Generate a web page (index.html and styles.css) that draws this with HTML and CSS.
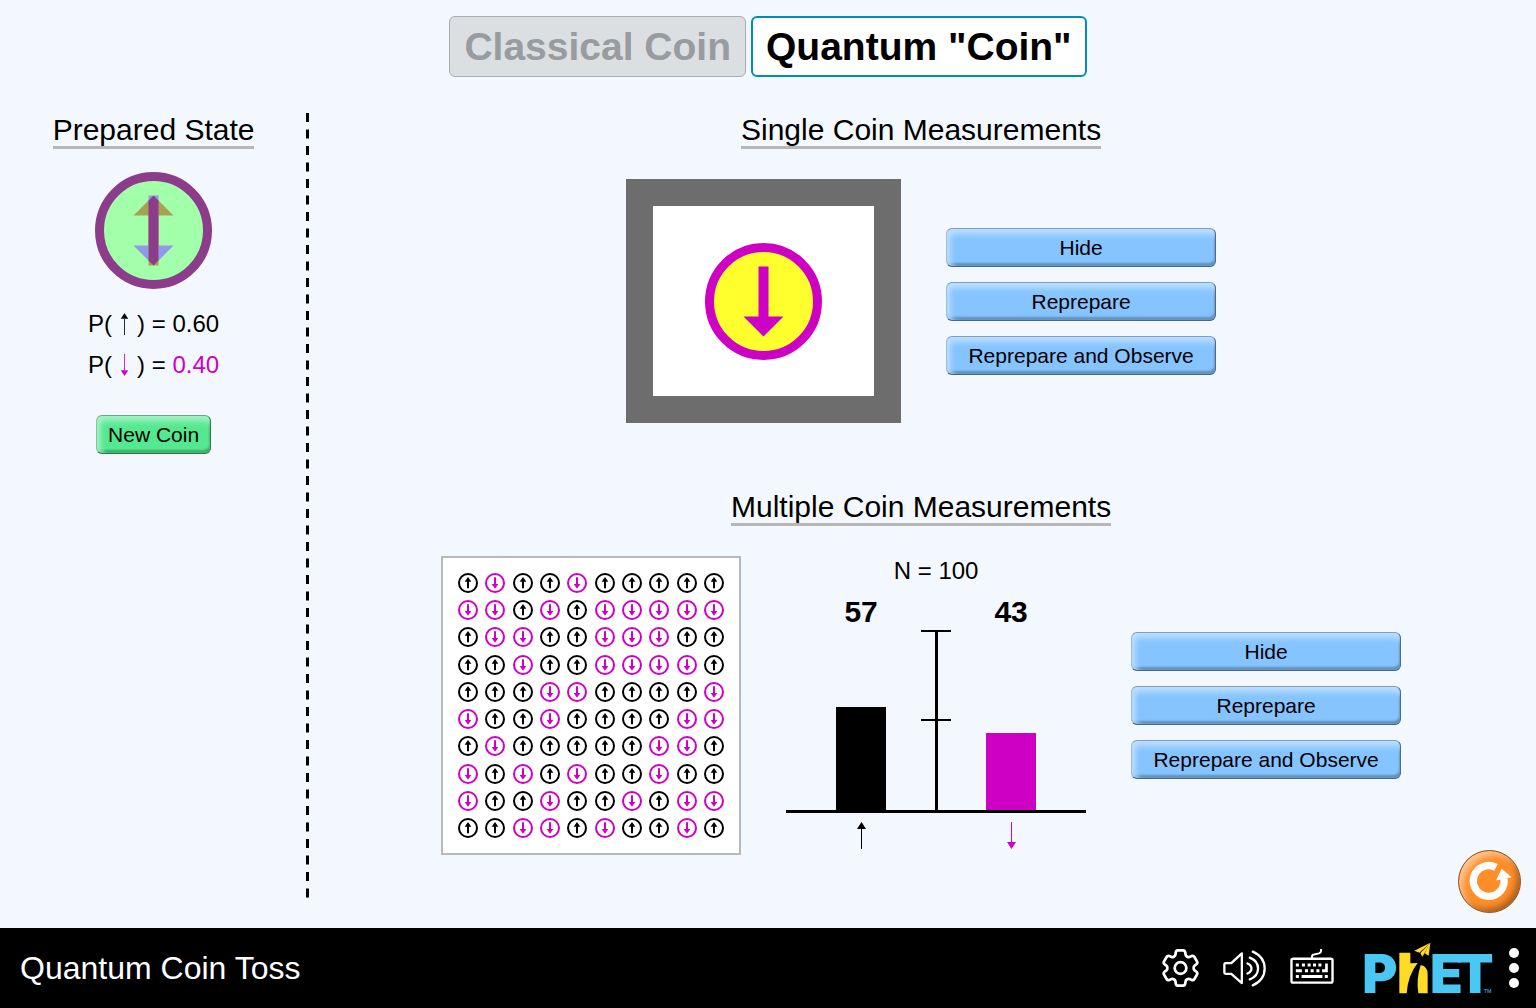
FILE: index.html
```html
<!DOCTYPE html>
<html lang="en">
<head>
  <meta charset="utf-8">
  <meta name="viewport" content="width=device-width, initial-scale=1">
  <title>Quantum Coin Toss</title>
  <link rel="stylesheet" href="styles.css">
  <script src="app.js" defer></script>
</head>
<body>
  <svg class="defs" width="0" height="0" aria-hidden="true">
    <symbol id="thin-up" viewBox="0 0 9 27"><path d="M4 7h1v20H4z"/><path d="M4.500 0L9 7H0z"/></symbol>
    <symbol id="thin-down" viewBox="0 0 9 27"><path d="M4 0h1v20H4z"/><path d="M4.500 27L9 20H0z"/></symbol>
    <symbol id="coin-up" viewBox="0 0 60 60">
      <circle cx="30" cy="30" r="27" fill="#fff" stroke="currentColor" stroke-width="6"/>
      <path d="M30 12l10 14h-7v20h-6V26h-7z"/>
    </symbol>
    <symbol id="coin-down" viewBox="0 0 60 60">
      <circle cx="30" cy="30" r="27" fill="#fff" stroke="currentColor" stroke-width="6"/>
      <path d="M30 47l-10-14h7V13h6v20h7z"/>
    </symbol>
  </svg>

  <main class="screen">
    <nav class="tabs" aria-label="Coin type">
      <button class="tab" type="button">Classical Coin</button>
      <button class="tab tab-active" type="button" aria-pressed="true">Quantum "Coin"</button>
    </nav>

    <div class="content">
      <aside class="prepared">
        <h2 class="heading">Prepared State</h2>
        <svg class="coin" viewBox="0 0 234 234" role="img" aria-label="Superposed coin">
          <circle cx="117" cy="117" r="108" fill="#a2ffaa" stroke="#8c3c8a" stroke-width="18"/>
          <path fill="#a3a352" d="M117 47l40 40h-30v100h-20V87H77z"/>
          <path fill="#8f99e8" d="M107 47h20v10l-10-10-10 10zM77 147h30v30zM157 147h-30v30z"/>
          <path fill="#8c3c8a" d="M117 47l10 10v120l-10 10-10-10V57z"/>
        </svg>
        <div class="probabilities">
          <p class="probability">P(<svg class="thin-arrow"><use href="#thin-up"/></svg>)&nbsp;=&nbsp;<span>0.60</span></p>
          <p class="probability">P(<svg class="thin-arrow down"><use href="#thin-down"/></svg>)&nbsp;=&nbsp;<span class="down">0.40</span></p>
        </div>
        <button class="button button-green" type="button">New Coin</button>
      </aside>

      <svg class="divider" aria-hidden="true"><line x1="50%" x2="50%" y1="0" y2="100%" pathLength="1570"/></svg>

      <div class="measurements">
        <section class="measurement">
          <h2 class="heading">Single Coin Measurements</h2>
          <div class="row">
            <div class="frame">
              <svg class="coin" viewBox="0 0 234 234" role="img" aria-label="Coin showing down">
                <circle cx="117" cy="117" r="108" fill="#ffff2d" stroke="#ce00c4" stroke-width="18"/>
                <path fill="#ce00c4" d="M117 187l40-40h-30V47h-20v100H77z"/>
              </svg>
            </div>
            <div class="actions">
              <button class="button" type="button">Hide</button>
              <button class="button" type="button">Reprepare</button>
              <button class="button" type="button">Reprepare and Observe</button>
            </div>
          </div>
        </section>

        <section class="measurement">
          <h2 class="heading">Multiple Coin Measurements</h2>
          <div class="row">
            <div class="matrix" id="matrix" role="img" aria-label="One hundred measured coins"></div>
            <div class="chart">
              <p class="total">N = 100</p>
              <div class="counts"><span>57</span><span>43</span></div>
              <div class="plot">
                <div class="bar" style="height:57%"></div>
                <div class="axis"></div>
                <div class="bar bar-down" style="height:43%"></div>
              </div>
              <div class="bar-labels">
                <span><svg class="thin-arrow"><use href="#thin-up"/></svg></span>
                <span><svg class="thin-arrow down"><use href="#thin-down"/></svg></span>
              </div>
            </div>
            <div class="actions">
              <button class="button" type="button">Hide</button>
              <button class="button" type="button">Reprepare</button>
              <button class="button" type="button">Reprepare and Observe</button>
            </div>
          </div>
        </section>
      </div>
    </div>

    <button class="reset" type="button" aria-label="Reset all">
      <svg viewBox="54 29 190 190" aria-hidden="true">
        <path d="M169 80A48 48 0 1 0 194 115" fill="none" stroke="#fff" stroke-width="23"/>
        <path d="M187 84l31 27-49 10z" fill="#fff"/>
      </svg>
    </button>
  </main>

  <footer class="navbar">
    <h1 class="title">Quantum Coin Toss</h1>
    <div class="tools">
      <button class="tool" type="button" aria-label="Preferences">
        <svg width="37" height="38" viewBox="2.500 2.500 19 19" fill="none" stroke="#fff" stroke-width="1.400" stroke-linejoin="round">
          <path d="M9.594 3.940c.09-.542.56-.94 1.110-.94h2.593c.55 0 1.020.398 1.110.94l.213 1.281c.063.374.313.686.645.87.074.04.147.083.22.127.325.196.72.257 1.075.124l1.217-.456a1.125 1.125 0 0 1 1.370.49l1.296 2.247a1.125 1.125 0 0 1-.26 1.431l-1.003.827c-.293.241-.438.613-.43.992a7.723 7.723 0 0 1 0 .255c-.008.378.137.75.43.991l1.004.827c.424.35.534.955.26 1.430l-1.298 2.247a1.125 1.125 0 0 1-1.369.491l-1.217-.456c-.355-.133-.75-.072-1.076.124a6.470 6.470 0 0 1-.22.128c-.331.183-.581.495-.644.869l-.213 1.281c-.09.543-.56.94-1.110.94h-2.594c-.55 0-1.019-.398-1.110-.94l-.213-1.281c-.062-.374-.312-.686-.644-.87a6.520 6.520 0 0 1-.22-.127c-.325-.196-.72-.257-1.076-.124l-1.217.456a1.125 1.125 0 0 1-1.369-.49l-1.297-2.247a1.125 1.125 0 0 1 .26-1.431l1.004-.827c.292-.24.437-.613.43-.991a6.932 6.932 0 0 1 0-.255c.007-.38-.138-.751-.43-.992l-1.004-.827a1.125 1.125 0 0 1-.26-1.430l1.297-2.247a1.125 1.125 0 0 1 1.370-.491l1.216.456c.356.133.751.072 1.076-.124.072-.044.146-.086.22-.128.332-.183.582-.495.644-.869l.214-1.280Z"/>
          <circle cx="12" cy="12" r="3"/>
        </svg>
      </button>
      <button class="tool" type="button" aria-label="Sound">
        <svg width="43" height="37" viewBox="233 59 130 112" fill="none" stroke="#fff" stroke-width="7" stroke-linecap="round" stroke-linejoin="round">
          <path d="M258 99h-17q-4 0-4 4v24q0 4 4 4h17l32 28V69z"/>
          <path d="M307 100q12 5 12 15t-12 15M314 82q25 10 25 33t-25 33M323 64q36 16 36 51t-36 51"/>
        </svg>
      </button>
      <button class="tool" type="button" aria-label="Keyboard shortcuts">
        <svg class="keyboard" width="44" height="35" viewBox="436 50 130 104">
          <path fill="none" stroke="#fff" stroke-width="6" d="M501 78v-6q0-5 6-6l15-3q6-2 6-8v-5"/>
          <rect x="440" y="79" width="122" height="71" rx="5" fill="none" stroke="#fff" stroke-width="7"/>
          <path fill="#fff" d="M453 93h9v9h-9zM471 93h9v9h-9zM488 93h9v9h-9zM504 93h9v9h-9zM520 93h9v9h-9zM540 93h8v26h-17v-9h9zM453 110h18v9h-18zM480 110h9v9h-9zM497 110h9v9h-9zM514 110h9v9h-9zM453 127h9v9h-9zM470 127h62v9h-62zM539 127h9v9h-9z"/>
        </svg>
      </button>
      <button class="tool phet" type="button" aria-label="PhET">
        <svg width="129" height="53" viewBox="43 36 387 159">
          <g class="phet-letters"><text x="38" y="189">P</text><text x="241" y="189">E</text><text x="321" y="189">T</text></g>
          <path fill="#fedb27" d="M149 68h33v32l22-1q-29 36-33 91h-22zM213 105q21 4 21 28v57h-28q-7-42 7-85z"/>
          <path fill="#fedb27" d="M242 38l-48 24 15 6zM242 38l-30 31 6 11 5-8zM242 38l-17 32 12 7z"/>
          <text class="phet-mark" x="402" y="188">TM</text>
        </svg>
      </button>
      <button class="tool" type="button" aria-label="PhET menu">
        <svg width="10" height="40" viewBox="0 0 10 40" fill="#fff"><circle cx="5" cy="5" r="5"/><circle cx="5" cy="20" r="5"/><circle cx="5" cy="35" r="5"/></svg>
      </button>
    </div>
  </footer>
</body>
</html>
```

FILE: styles.css
```css
* { box-sizing: border-box; }

body {
  display: flex;
  flex-direction: column;
  min-height: 100vh;
  margin: 0;
  background: #f3f8ff;
  color: #000;
  font-family: "Liberation Sans", Arial, sans-serif;
}

button {
  padding: 0;
  border: 0;
  background: none;
  color: inherit;
  font: inherit;
  cursor: pointer;
}

p, h1, h2 { margin: 0; font-weight: normal; }
svg { display: block; }
.defs { position: absolute; }
.down { color: #ce00c4; }

.screen {
  position: relative;
  display: flex;
  flex: 1;
  flex-direction: column;
  gap: 36px;
  padding: 16px 0 30px;
}

.tabs { display: flex; justify-content: center; gap: 5px; }

.tab {
  height: 61px;
  padding: 0 14px;
  border: 1px solid #a9adb0;
  border-radius: 6px;
  background: #dbdfe2;
  color: #989c9f;
  font-size: 39px;
  font-weight: bold;
  line-height: 59px;
}

.tab-active {
  padding: 0 13px;
  border: 2px solid #008eb5;
  background: #fff;
  color: #000;
  line-height: 57px;
}

.content { display: flex; flex: 1; }

.prepared {
  display: flex;
  flex: 0 0 20%;
  flex-direction: column;
  align-items: center;
}

.heading {
  border-bottom: 3px solid #b7b7b7;
  font-size: 30px;
  line-height: 33px;
}

.coin { width: 117px; height: 117px; }
.prepared .coin { margin-top: 23px; }
.probabilities { margin: 14px 0 30px; font-size: 24px; }

.probability {
  display: flex;
  align-items: center;
  height: 41px;
}

.thin-arrow { width: 9px; height: 27px; fill: currentColor; }
.probability .thin-arrow { height: 22px; margin: 0 8px; }

.divider { flex: none; width: 3px; height: auto; align-self: stretch; margin: 0 -3px 0 -1px; }
.divider line { stroke: #000; stroke-width: 3px; stroke-dasharray: 18 15; }

.measurements {
  display: flex;
  flex: 1;
  flex-direction: column;
  align-items: center;
  gap: 67px;
}

.measurement {
  display: flex;
  flex-direction: column;
  align-items: center;
  gap: 30px;
}

.row { display: flex; align-items: center; gap: 45px; }

.frame {
  display: grid;
  place-items: center;
  width: 275px;
  height: 244px;
  border: 27px solid #6d6d6d;
  background: #fff;
}

.actions { display: flex; flex-direction: column; gap: 15px; width: 270px; }

.button {
  height: 39px;
  padding: 1px 11px 0;
  border: 1px solid;
  border-color: #7f9fbd #4a6d8f #44688c #9fbdd8;
  border-radius: 6px;
  background: #85c4ff;
  box-shadow: inset 0 8px 6px -3px #bcdfff, inset 6px 0 5px -2px #b4daff, inset -1px -3px 2px #5b8cb9;
  font-size: 21px;
}

.button-green {
  border-color: #6aa884 #327f50 #2f7a4c #86c79f;
  background: #54e990;
  box-shadow: inset 0 8px 6px -3px #a5f3c4, inset 6px 0 5px -2px #9af1bd, inset -1px -3px 2px #3aa766;
}

.matrix {
  display: grid;
  grid-template-columns: repeat(10, 20px);
  align-content: space-between;
  justify-content: space-between;
  width: 300px;
  height: 299px;
  padding: 15px;
  border: 2px solid #b9b9b9;
  background: #fff;
}

.matrix svg { width: 20px; height: 20px; fill: currentColor; }

.chart { align-self: flex-start; width: 300px; }
.total { font-size: 24px; line-height: 30px; text-align: center; }

.counts, .bar-labels { display: flex; justify-content: space-between; padding: 0 50px; }
.counts span, .bar-labels span { display: flex; justify-content: center; width: 50px; }
.counts { margin-top: 8px; font-size: 30px; font-weight: bold; line-height: 36px; }
.bar-labels { margin-top: 9px; }

.plot {
  display: flex;
  align-items: flex-end;
  justify-content: space-between;
  height: 183px;
  padding: 0 50px;
  border-bottom: 3px solid #000;
}

.bar { width: 50px; background: #000; }
.bar-down { background: #ce00c4; }

.axis {
  width: 30px;
  height: 100%;
  background:
    linear-gradient(#000, #000) center / 3px 100% no-repeat,
    linear-gradient(#000, #000) top / 100% 2px no-repeat,
    linear-gradient(#000, #000) center / 100% 2px no-repeat;
}

.reset {
  position: absolute;
  right: 15px;
  bottom: 15px;
  width: 63px;
  height: 63px;
  border: 1px solid #8a5427;
  border-radius: 50%;
  background: #ff8e28;
  box-shadow: inset 5px 5px 6px -1px #ffc596, inset -4px -4px 6px -1px #a9601f;
}

.reset svg { width: 61px; height: 61px; }

.navbar {
  display: flex;
  align-items: center;
  justify-content: space-between;
  height: 80px;
  padding: 0 17px 0 20px;
  background: #000;
  color: #fff;
}

.title { font-size: 32px; }
.tools { display: flex; align-items: center; gap: 24px; }
.keyboard { margin-bottom: 4px; }
.phet { margin: 0 -8px 0 6px; }
.phet svg { overflow: visible; }
.phet-letters { fill: #4ac7f3; font: 900 161px Inter, sans-serif; }
.phet-mark { fill: #4ac7f3; font: 16px "Liberation Sans", sans-serif; }
```

FILE: app.js
```js
// Outcome of each coin in the 10 x 10 grid: U = up, D = down.
const outcomes = [
  'UDUUDUUUUU',
  'DDUDUDDDDD',
  'UDDUUDDDUU',
  'UUDUUDDDDU',
  'UUUDDUUUUD',
  'DUUDUUUUDD',
  'UDUUUUUDDU',
  'DUDUDUUDUU',
  'DUUDUUDUDD',
  'UUDDUDUUDU'
];

document.getElementById('matrix').innerHTML = [...outcomes.join('')]
  .map(side => side === 'U'
    ? '<svg><use href="#coin-up"/></svg>'
    : '<svg class="down"><use href="#coin-down"/></svg>')
  .join('');
```
